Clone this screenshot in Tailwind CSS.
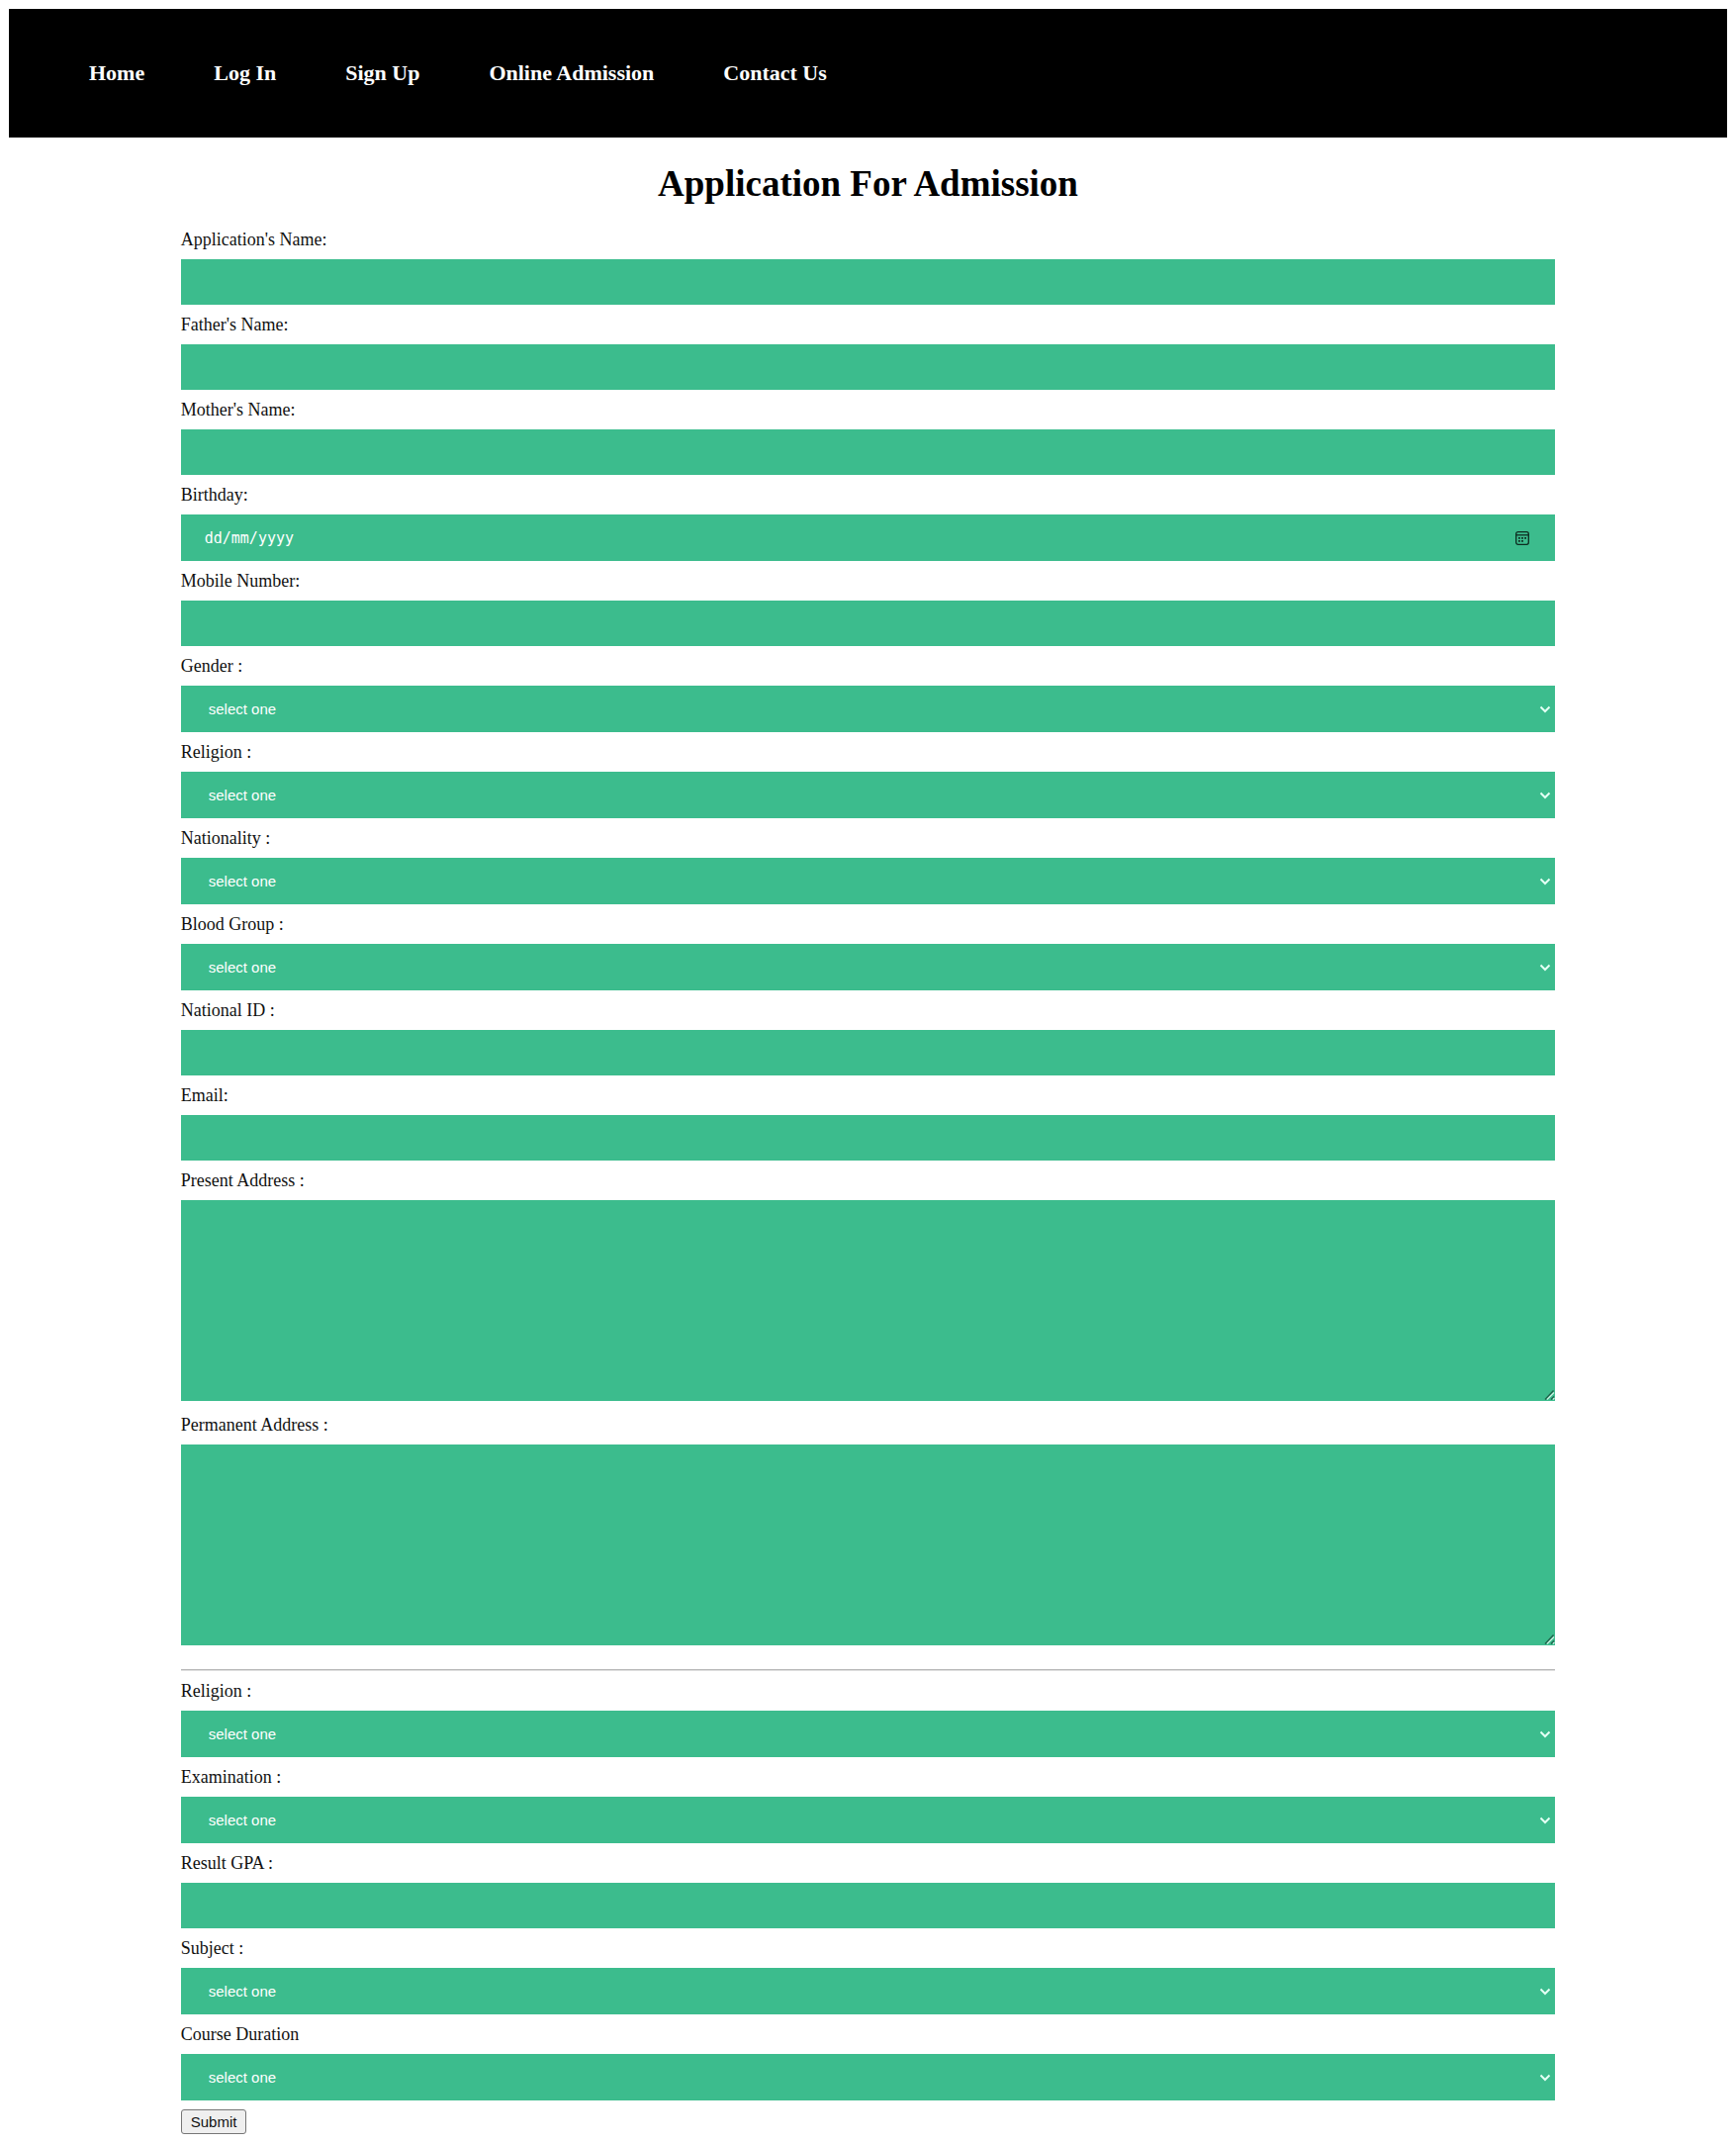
<!DOCTYPE html>
<html lang="en-GB">
<head>
<meta charset="utf-8">
<meta name="viewport" content="width=device-width, initial-scale=1">
<title>Application For Admission</title>
<script src="https://cdn.jsdelivr.net/npm/@tailwindcss/browser@4"></script>
</head>
<body class="bg-white p-[9px] font-['Liberation_Serif',serif] text-[18px] leading-[20px] text-[#111]">
<svg class="hidden" aria-hidden="true">
  <symbol id="chevron" viewBox="0 0 12 8"><path d="M1.500 1.500 6 6l4.500-4.500" fill="none" stroke="#e4fff5" stroke-width="2"/></symbol>
  <symbol id="grip" viewBox="0 0 11 11"><path d="M0 0h11v11H0z" fill="#3cbc8d"/><path d="M1 10.500 9.500 1.500M7 10.500l3-3" stroke="#1f5f49" stroke-width="1.300"/><path d="M3 10.500l7-7M9 10.500l1.500-1.500" stroke="#c9f0e0" stroke-width="1.300"/></symbol>
</svg>
<header class="bg-black pt-[52px] pb-[53px] pl-[81px]">
  <nav class="flex flex-wrap gap-x-[70px] text-[22px] leading-[25px] font-bold text-white">
    <a href="#">Home</a>
    <a href="#">Log In</a>
    <a href="#">Sign Up</a>
    <a href="#">Online Admission</a>
    <a href="#">Contact Us</a>
  </nav>
</header>
<main>
  <h1 class="mt-[26px] mb-[15px] text-center text-[37px] leading-[42px] font-bold text-black">Application For Admission</h1>
  <form class="mx-auto flex w-4/5 flex-col">
    <label for="name" class="py-[10px]">Application's Name:</label>
    <input id="name" type="text" class="h-[46px] w-full bg-[#3cbc8d] px-[23px] font-['Liberation_Sans',sans-serif] text-[15px] text-white">
    <label for="father" class="py-[10px]">Father's Name:</label>
    <input id="father" type="text" class="h-[46px] w-full bg-[#3cbc8d] px-[23px] font-['Liberation_Sans',sans-serif] text-[15px] text-white">
    <label for="mother" class="py-[10px]">Mother's Name:</label>
    <input id="mother" type="text" class="h-[46px] w-full bg-[#3cbc8d] px-[23px] font-['Liberation_Sans',sans-serif] text-[15px] text-white">
    <label for="birthday" class="py-[10px]">Birthday:</label>
    <div class="flex h-[47px] items-center bg-[#3cbc8d] pr-[26px] pl-6">
      <input id="birthday" type="text" placeholder="dd/mm/yyyy" class="min-w-0 flex-1 bg-transparent font-['DejaVu_Sans_Mono',monospace] text-[15px] text-white placeholder:text-white">
      <button type="button" aria-label="Open calendar">
        <svg class="block size-[14px]" viewBox="0 0 14 14" fill="none" stroke="#0d2c20" stroke-width="1.300"><rect x=".7" y=".7" width="12.600" height="12.600" rx="2"/><path d="M.7 3.800h12.600"/><path d="M3 6.800h1.800M6.100 6.800h1.800M9.200 6.800H11M3 9.800h1.800M6.100 9.800h1.800" stroke-width="1.800"/></svg>
      </button>
    </div>
    <label for="mobile" class="py-[10px]">Mobile Number:</label>
    <input id="mobile" type="tel" class="h-[46px] w-full bg-[#3cbc8d] px-[23px] font-['Liberation_Sans',sans-serif] text-[15px] text-white">
    <label for="gender" class="py-[10px]">Gender :</label>
    <div class="relative">
      <select id="gender" class="block h-[47px] w-full appearance-none bg-[#3cbc8d] pl-7 font-['Liberation_Sans',sans-serif] text-[15px] text-white"><option>select one</option></select>
      <svg class="pointer-events-none absolute top-5 right-1 h-2 w-3"><use href="#chevron"/></svg>
    </div>
    <label for="religion" class="py-[10px]">Religion :</label>
    <div class="relative">
      <select id="religion" class="block h-[47px] w-full appearance-none bg-[#3cbc8d] pl-7 font-['Liberation_Sans',sans-serif] text-[15px] text-white"><option>select one</option></select>
      <svg class="pointer-events-none absolute top-5 right-1 h-2 w-3"><use href="#chevron"/></svg>
    </div>
    <label for="nationality" class="py-[10px]">Nationality :</label>
    <div class="relative">
      <select id="nationality" class="block h-[47px] w-full appearance-none bg-[#3cbc8d] pl-7 font-['Liberation_Sans',sans-serif] text-[15px] text-white"><option>select one</option></select>
      <svg class="pointer-events-none absolute top-5 right-1 h-2 w-3"><use href="#chevron"/></svg>
    </div>
    <label for="blood" class="py-[10px]">Blood Group :</label>
    <div class="relative">
      <select id="blood" class="block h-[47px] w-full appearance-none bg-[#3cbc8d] pl-7 font-['Liberation_Sans',sans-serif] text-[15px] text-white"><option>select one</option></select>
      <svg class="pointer-events-none absolute top-5 right-1 h-2 w-3"><use href="#chevron"/></svg>
    </div>
    <label for="nid" class="py-[10px]">National ID :</label>
    <input id="nid" type="text" class="h-[46px] w-full bg-[#3cbc8d] px-[23px] font-['Liberation_Sans',sans-serif] text-[15px] text-white">
    <label for="email" class="py-[10px]">Email:</label>
    <input id="email" type="email" class="h-[46px] w-full bg-[#3cbc8d] px-[23px] font-['Liberation_Sans',sans-serif] text-[15px] text-white">
    <label for="present" class="py-[10px]">Present Address :</label>
    <div class="relative mb-1">
      <textarea id="present" class="block h-[203px] w-full resize-y bg-[#3cbc8d] px-[23px] py-[14px] font-['Liberation_Mono',monospace] text-[15px] text-white"></textarea>
      <svg class="pointer-events-none absolute right-0 bottom-px size-[11px]"><use href="#grip"/></svg>
    </div>
    <label for="permanent" class="py-[10px]">Permanent Address :</label>
    <div class="relative mb-1">
      <textarea id="permanent" class="block h-[203px] w-full resize-y bg-[#3cbc8d] px-[23px] py-[14px] font-['Liberation_Mono',monospace] text-[15px] text-white"></textarea>
      <svg class="pointer-events-none absolute right-0 bottom-px size-[11px]"><use href="#grip"/></svg>
    </div>
    <hr class="mt-5 h-[2px] border-t border-b border-t-[#b8b8b8] border-b-[#dedede]">
    <label for="religion2" class="py-[10px]">Religion :</label>
    <div class="relative">
      <select id="religion2" class="block h-[47px] w-full appearance-none bg-[#3cbc8d] pl-7 font-['Liberation_Sans',sans-serif] text-[15px] text-white"><option>select one</option></select>
      <svg class="pointer-events-none absolute top-5 right-1 h-2 w-3"><use href="#chevron"/></svg>
    </div>
    <label for="exam" class="py-[10px]">Examination :</label>
    <div class="relative">
      <select id="exam" class="block h-[47px] w-full appearance-none bg-[#3cbc8d] pl-7 font-['Liberation_Sans',sans-serif] text-[15px] text-white"><option>select one</option></select>
      <svg class="pointer-events-none absolute top-5 right-1 h-2 w-3"><use href="#chevron"/></svg>
    </div>
    <label for="gpa" class="py-[10px]">Result GPA :</label>
    <input id="gpa" type="text" class="h-[46px] w-full bg-[#3cbc8d] px-[23px] font-['Liberation_Sans',sans-serif] text-[15px] text-white">
    <label for="subject" class="py-[10px]">Subject :</label>
    <div class="relative">
      <select id="subject" class="block h-[47px] w-full appearance-none bg-[#3cbc8d] pl-7 font-['Liberation_Sans',sans-serif] text-[15px] text-white"><option>select one</option></select>
      <svg class="pointer-events-none absolute top-5 right-1 h-2 w-3"><use href="#chevron"/></svg>
    </div>
    <label for="duration" class="py-[10px]">Course Duration</label>
    <div class="relative">
      <select id="duration" class="block h-[47px] w-full appearance-none bg-[#3cbc8d] pl-7 font-['Liberation_Sans',sans-serif] text-[15px] text-white"><option>select one</option></select>
      <svg class="pointer-events-none absolute top-5 right-1 h-2 w-3"><use href="#chevron"/></svg>
    </div>
    <button type="submit" class="mt-[9px] h-[25px] self-start rounded-[3px] border border-[#767676] bg-[#efefef] px-[9px] font-['Liberation_Sans',sans-serif] text-[15px] leading-[17px]">Submit</button>
  </form>
</main>
</body>
</html>
